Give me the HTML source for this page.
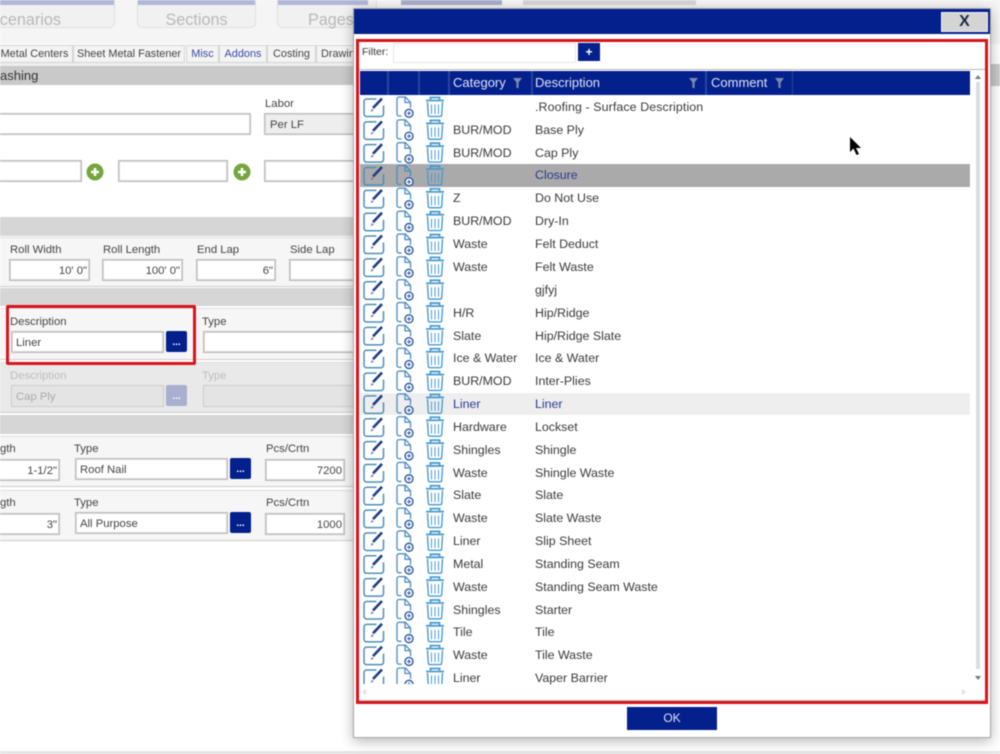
<!DOCTYPE html>
<html><head><meta charset="utf-8"><style>
html,body{margin:0;padding:0;background:#fff}
#p{position:relative;width:1000px;height:754px;overflow:hidden;background:#fff;font:12px "Liberation Sans",sans-serif;color:#333;filter:blur(.45px)}
#p div{position:absolute;box-sizing:border-box;white-space:nowrap}
.in{background:#fff;border:1px solid #bababa;box-shadow:inset 0 0 0 1px #d8d8d8;height:22px;line-height:20px;padding:1px 4px 0;font-size:11.3px;color:#444}
.r{text-align:right;padding-right:2px}
.l{font-size:11.3px;color:#444;line-height:14px}
.band{left:0;width:356px;background:#d6d6d6}
.pan{left:0;width:356px;background:#f6f6f6;border-top:1px solid #ddd;border-bottom:1px solid #ccc}
.b{background:#04208c;border-radius:2px;color:#fff;text-align:center;font-size:10px;font-weight:bold;line-height:23px;width:21px;height:21px}
.tab{top:45px;height:18px;background:#f4f4f4;border:1px solid #d4d4d4;line-height:16px;text-align:center;font-size:10.9px;color:#444}
.card{top:-6px;height:34px;background:#f1f1f1;border:1px solid #e0e0e0;border-radius:5px;color:#b8b8b8;font-size:16.2px;line-height:50px;text-align:center}
.cap{top:0;height:5px;background:#b3b7d6}
.c{font-size:12.4px;color:#3a3a3a;line-height:16px}
.d{left:535px;font-size:12.4px;color:#3a3a3a;line-height:16px}
.h{top:75px;color:#dfe4f5;font-size:13px;line-height:16px}
.sep{top:71px;width:2px;height:24px;background:#2b429c}
.rb{border:3px solid #d9121b;background:transparent}
</style></head><body><div id="p">

<div style="left:0;top:0;width:1000px;height:44px;background:#f5f5f5"></div>
<div class="card" style="left:-20px;width:135px;text-align:left;padding-left:8px">Scenarios</div>
<div class="card" style="left:137px;width:119px">Sections</div>
<div class="card" style="left:277px;width:100px;text-align:left;padding-left:30px">Pages</div>
<div class="cap" style="left:0;width:114px"></div>
<div class="cap" style="left:138px;width:117px"></div>
<div class="cap" style="left:278px;width:90px"></div>
<div class="cap" style="left:401px;width:101px;background:#a9adc9"></div>
<div class="cap" style="left:523px;width:173px;background:#d6d6d6"></div>

<div style="left:0;top:63px;width:356px;height:3px;background:#eee"></div>
<div class="tab" style="left:-4px;width:77px">Metal Centers</div>
<div class="tab" style="left:73px;width:112px">Sheet Metal Fastener</div>
<div class="tab" style="left:186px;width:33px;color:#3b4aa0">Misc</div>
<div class="tab" style="left:219px;width:48px;color:#3b4aa0">Addons</div>
<div class="tab" style="left:267px;width:49px">Costing</div>
<div class="tab" style="left:316px;width:45px;text-align:left;padding-left:4px">Drawing</div>
<div style="left:0;top:66px;width:356px;height:19px;background:#c9c9c9;font-size:13px;line-height:19px;color:#333">ashing</div>

<div class="l" style="left:265px;top:97px">Labor</div>
<div class="in" style="left:-5px;top:113px;width:256px;height:22px"></div>
<div class="in" style="left:264px;top:113px;width:95px;background:#eee;padding-left:5px">Per LF</div>
<div class="in" style="left:-5px;top:160px;width:87px"></div>
<div class="in" style="left:118px;top:160px;width:110px"></div>
<div class="in" style="left:264px;top:160px;width:95px"></div>
<svg style="position:absolute;left:86px;top:163px" width="18" height="18"><circle cx="9" cy="9" r="8.500" fill="#74a63c"/><path d="M9 5v8M5 9h8" stroke="#fff" stroke-width="2.600"/></svg>
<svg style="position:absolute;left:233px;top:163px" width="18" height="18"><circle cx="9" cy="9" r="8.500" fill="#74a63c"/><path d="M9 5v8M5 9h8" stroke="#fff" stroke-width="2.600"/></svg>

<div class="band" style="top:217px;height:19px"></div>
<div class="pan" style="top:237px;height:50px"></div>
<div class="l" style="left:10px;top:243px">Roll Width</div>
<div class="l" style="left:103px;top:243px">Roll Length</div>
<div class="l" style="left:197px;top:243px">End Lap</div>
<div class="l" style="left:290px;top:243px">Side Lap</div>
<div class="in r" style="left:9px;top:259px;width:81px">10' 0"</div>
<div class="in r" style="left:102px;top:259px;width:81px">100' 0"</div>
<div class="in r" style="left:196px;top:259px;width:80px">6"</div>
<div class="in" style="left:289px;top:259px;width:70px"></div>

<div class="band" style="top:288px;height:18px"></div>
<div class="pan" style="top:308px;height:52px"></div>
<div class="l" style="left:10px;top:315px">Description</div>
<div class="l" style="left:202px;top:315px">Type</div>
<div class="in" style="left:11px;top:331px;width:153px">Liner</div>
<div class="b" style="left:166px;top:331px">...</div>
<div class="in" style="left:203px;top:331px;width:156px"></div>

<div style="left:0;top:362px;width:356px;height:51px;background:#e9e9e9;border-top:1px solid #ddd;border-bottom:1px solid #ccc"></div>
<div class="l" style="left:10px;top:369px;color:#bdbdbd">Description</div>
<div class="l" style="left:202px;top:369px;color:#bdbdbd">Type</div>
<div class="in" style="left:11px;top:385px;width:153px;background:#e4e4e4;color:#aaa;box-shadow:none;border-color:#ccc">Cap Ply</div>
<div class="b" style="left:166px;top:385px;background:#a9afcf">...</div>
<div class="in" style="left:203px;top:385px;width:156px;background:#e4e4e4;box-shadow:none;border-color:#ccc"></div>
<div class="rb" style="left:6px;top:305px;width:190px;height:60px;border-radius:2px"></div>

<div class="band" style="top:415px;height:19px"></div>
<div class="pan" style="top:436px;height:51px"></div>
<div class="pan" style="top:490px;height:51px"></div>
<div class="l" style="left:0;top:442px">gth</div>
<div class="l" style="left:74px;top:442px">Type</div>
<div class="l" style="left:266px;top:442px">Pcs/Crtn</div>
<div class="in r" style="left:-5px;top:459px;width:65px">1-1/2"</div>
<div class="in" style="left:75px;top:458px;width:153px">Roof Nail</div>
<div class="b" style="left:230px;top:458px">...</div>
<div class="in r" style="left:265px;top:459px;width:80px">7200</div>
<div class="l" style="left:0;top:496px">gth</div>
<div class="l" style="left:74px;top:496px">Type</div>
<div class="l" style="left:266px;top:496px">Pcs/Crtn</div>
<div class="in r" style="left:-5px;top:513px;width:65px">3"</div>
<div class="in" style="left:75px;top:512px;width:153px">All Purpose</div>
<div class="b" style="left:230px;top:512px">...</div>
<div class="in r" style="left:265px;top:513px;width:80px">1000</div>
<div style="left:0;top:751px;width:1000px;height:3px;background:#e4e4e4"></div>
<div style="left:991px;top:64px;width:9px;height:22px;background:#c9c9c9"></div>

<!-- dialog -->
<div style="left:353px;top:8px;width:638px;height:730px;background:#fff;border:1px solid #a8a8a8;box-shadow:0 3px 12px rgba(0,0,0,.3)"></div>
<div style="left:354px;top:9px;width:636px;height:25px;background:#04208c"></div>
<div style="left:941px;top:12px;width:47px;height:20px;background:#d4d4d4;border:1px solid #eee;color:#1c2a4a;font-size:16px;font-weight:bold;line-height:18px;text-align:center">X</div>

<div style="left:362px;top:46px;font-size:10.5px;line-height:13px;color:#333">Filter:</div>
<div style="left:393px;top:43px;width:183px;height:20px;background:#fff;border:1px solid #e6e6e6"></div>
<div style="left:578px;top:43px;width:22px;height:18px;background:#04208c;color:#fff;font-size:12px;font-weight:bold;line-height:19px;text-align:center">+</div>
<div style="left:358px;top:69px;width:627px;height:1px;background:#bbb"></div>

<div style="left:360px;top:71px;width:610px;height:24px;background:#04208c"></div>
<div class="sep" style="left:387px"></div>
<div class="sep" style="left:418px"></div>
<div class="sep" style="left:448px"></div>
<div class="sep" style="left:531px"></div>
<div class="sep" style="left:705px"></div>
<div class="sep" style="left:792px;width:1px"></div>
<div class="h" style="left:453px">Category</div>
<div class="h" style="left:535px">Description</div>
<div class="h" style="left:711px">Comment</div>
<svg style="position:absolute;left:513px;top:78px" width="9" height="10"><path d="M0 0h9L5.600 4.500V10H3.400V4.500z" fill="#7c88ad"/></svg>
<svg style="position:absolute;left:689px;top:78px" width="9" height="10"><path d="M0 0h9L5.600 4.500V10H3.400V4.500z" fill="#7c88ad"/></svg>
<svg style="position:absolute;left:775px;top:78px" width="9" height="10"><path d="M0 0h9L5.600 4.500V10H3.400V4.500z" fill="#7c88ad"/></svg>

<div style="left:360px;top:164px;width:610px;height:23px;background:#aaa"></div>
<div style="left:360px;top:393px;width:610px;height:22px;background:#eeeeef"></div>

<svg style="position:absolute;left:360px;top:95px" width="90" height="589" viewBox="0 0 90 589">
<defs><g id="ic" fill="none">
<path d="M16.500 4H6.500a2.500 2.500 0 0 0-2.500 2.500V19a2.500 2.500 0 0 0 2.500 2.500H21a2.500 2.500 0 0 0 2.500-2.500V10.500" stroke="#4a90bc" stroke-width="1.500"/>
<path d="M13 13L22 3.500" stroke="#1f3c86" stroke-width="2.600"/>
<path d="M12.300 14l-.8 2 2-.8" stroke="#6d7fb0" stroke-width="1"/>
<path d="M41.500 21h-2.500a2 2 0 0 1-2-2V4a2 2 0 0 1 2-2h6.500L50.500 7.500V13M45 2v5.500h5.500" stroke="#4d8cc0" stroke-width="1.300"/>
<circle cx="49" cy="18.300" r="4" fill="#fff" stroke="#2b5a9c" stroke-width="1.400"/><path d="M47 18.300h4M49 16.300v4" stroke="#2b5a9c" stroke-width="1"/>
<path d="M66 5.500h18M70.500 4.500V2.500h9v2" stroke="#4a9bd0" stroke-width="1.800"/>
<path d="M67.500 7l.8 13a1.500 1.500 0 0 0 1.500 1.400h10.400a1.500 1.500 0 0 0 1.500-1.400l.8-13" stroke="#4a9bd0" stroke-width="1.400"/>
<path d="M71.500 9.500v9.500M75 9.500v9.500M78.500 9.500v9.500" stroke="#4a9bd0" stroke-width="1"/>
</g></defs>
<use href="#ic" y="0"/><use href="#ic" y="22.840"/><use href="#ic" y="45.680"/><use href="#ic" y="68.520"/><use href="#ic" y="91.360"/><use href="#ic" y="114.200"/><use href="#ic" y="137.040"/><use href="#ic" y="159.880"/><use href="#ic" y="182.720"/><use href="#ic" y="205.560"/><use href="#ic" y="228.400"/><use href="#ic" y="251.240"/><use href="#ic" y="274.080"/><use href="#ic" y="296.920"/><use href="#ic" y="319.760"/><use href="#ic" y="342.600"/><use href="#ic" y="365.440"/><use href="#ic" y="388.280"/><use href="#ic" y="411.120"/><use href="#ic" y="433.960"/><use href="#ic" y="456.800"/><use href="#ic" y="479.640"/><use href="#ic" y="502.480"/><use href="#ic" y="525.320"/><use href="#ic" y="548.160"/><use href="#ic" y="571"/>
</svg>

<div class="d" style="top:99px;letter-spacing:.1px">.Roofing - Surface Description</div>
<div class="c" style="left:453px;top:122px">BUR/MOD</div><div class="d" style="top:122px">Base Ply</div>
<div class="c" style="left:453px;top:145px">BUR/MOD</div><div class="d" style="top:145px">Cap Ply</div>
<div class="d" style="top:167px;color:#2b3a8c">Closure</div>
<div class="c" style="left:453px;top:190px">Z</div><div class="d" style="top:190px">Do Not Use</div>
<div class="c" style="left:453px;top:213px">BUR/MOD</div><div class="d" style="top:213px">Dry-In</div>
<div class="c" style="left:453px;top:236px">Waste</div><div class="d" style="top:236px">Felt Deduct</div>
<div class="c" style="left:453px;top:259px">Waste</div><div class="d" style="top:259px">Felt Waste</div>
<div class="d" style="top:282px">gjfyj</div>
<div class="c" style="left:453px;top:305px">H/R</div><div class="d" style="top:305px">Hip/Ridge</div>
<div class="c" style="left:453px;top:328px">Slate</div><div class="d" style="top:328px">Hip/Ridge Slate</div>
<div class="c" style="left:453px;top:350px">Ice &amp; Water</div><div class="d" style="top:350px">Ice &amp; Water</div>
<div class="c" style="left:453px;top:373px">BUR/MOD</div><div class="d" style="top:373px">Inter-Plies</div>
<div class="c" style="left:453px;top:396px;color:#2b3a8c">Liner</div><div class="d" style="top:396px;color:#2b3a8c">Liner</div>
<div class="c" style="left:453px;top:419px">Hardware</div><div class="d" style="top:419px">Lockset</div>
<div class="c" style="left:453px;top:442px">Shingles</div><div class="d" style="top:442px">Shingle</div>
<div class="c" style="left:453px;top:465px">Waste</div><div class="d" style="top:465px">Shingle Waste</div>
<div class="c" style="left:453px;top:487px">Slate</div><div class="d" style="top:487px">Slate</div>
<div class="c" style="left:453px;top:510px">Waste</div><div class="d" style="top:510px">Slate Waste</div>
<div class="c" style="left:453px;top:533px">Liner</div><div class="d" style="top:533px">Slip Sheet</div>
<div class="c" style="left:453px;top:556px">Metal</div><div class="d" style="top:556px">Standing Seam</div>
<div class="c" style="left:453px;top:579px">Waste</div><div class="d" style="top:579px">Standing Seam Waste</div>
<div class="c" style="left:453px;top:602px">Shingles</div><div class="d" style="top:602px">Starter</div>
<div class="c" style="left:453px;top:624px">Tile</div><div class="d" style="top:624px">Tile</div>
<div class="c" style="left:453px;top:647px">Waste</div><div class="d" style="top:647px">Tile Waste</div>
<div class="c" style="left:453px;top:670px">Liner</div><div class="d" style="top:670px">Vaper Barrier</div>

<div style="left:976px;top:82px;width:4px;height:587px;background:#dcdcdc"></div>
<svg style="position:absolute;left:975px;top:75px" width="6" height="4"><path d="M0 4L3 0l3 4z" fill="#777"/></svg>
<svg style="position:absolute;left:975px;top:676px" width="6" height="4"><path d="M0 0l3 4 3-4z" fill="#777"/></svg>
<svg style="position:absolute;left:362px;top:689px" width="4" height="6"><path d="M4 0L0 3l4 3z" fill="#ddd"/></svg>
<svg style="position:absolute;left:962px;top:689px" width="4" height="6"><path d="M0 0l4 3-4 3z" fill="#ddd"/></svg>
<div style="left:358px;top:700px;width:627px;height:1px;background:#bbb"></div>
<div class="rb" style="left:356px;top:39px;width:632px;height:665px"></div>

<div style="left:627px;top:707px;width:90px;height:23px;background:#04208c;color:#dfe4f5;font-size:12px;line-height:22px;text-align:center">OK</div>

<svg style="position:absolute;left:849px;top:136px" width="14" height="21"><path d="M1 1v15l3.500-3.500L7.500 19l2.500-1-3-6h5z" fill="#000"/></svg>
</div></body></html>
